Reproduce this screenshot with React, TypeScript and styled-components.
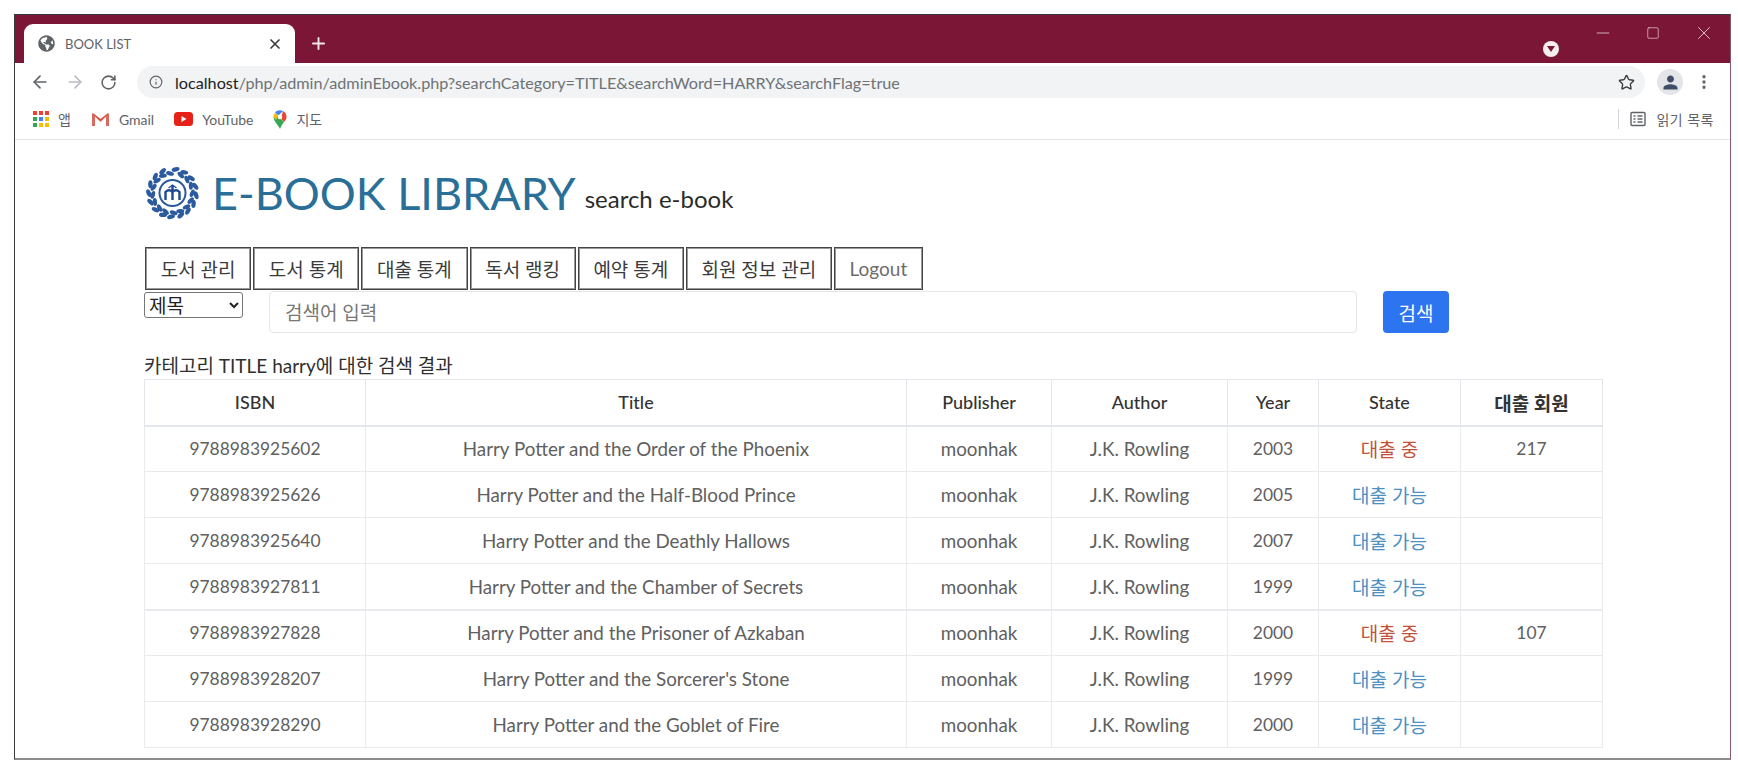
import React from 'react';
import styled, { createGlobalStyle } from 'styled-components';
import { FaGlobeAmericas } from 'react-icons/fa';
import { MdPerson } from 'react-icons/md';
import { ArrowLeft, ArrowRight, Info, Minus, MoreVertical, Plus, RotateCw, Square, Star, X } from 'lucide-react';

const LATIN = '"Lato", "Noto Sans CJK KR", sans-serif';

const GlobalStyle = createGlobalStyle`
  html, body {
    margin: 0;
    padding: 0;
    width: 1738px;
    height: 766px;
    overflow: hidden;
    background: #fff;
    font-family: ${LATIN};
  }
  * {
    box-sizing: border-box;
  }
`;

type Book = {
  isbn: string;
  title: string;
  year: string;
  member?: string;
};

const books: Book[] = [
  { isbn: '9788983925602', title: 'Harry Potter and the Order of the Phoenix', year: '2003', member: '217' },
  { isbn: '9788983925626', title: 'Harry Potter and the Half-Blood Prince', year: '2005' },
  { isbn: '9788983925640', title: 'Harry Potter and the Deathly Hallows', year: '2007' },
  { isbn: '9788983927811', title: 'Harry Potter and the Chamber of Secrets', year: '1999' },
  { isbn: '9788983927828', title: 'Harry Potter and the Prisoner of Azkaban', year: '2000', member: '107' },
  { isbn: '9788983928207', title: "Harry Potter and the Sorcerer's Stone", year: '1999' },
  { isbn: '9788983928290', title: 'Harry Potter and the Goblet of Fire', year: '2000' },
];

const menus = ['도서 관리', '도서 통계', '대출 통계', '독서 랭킹', '예약 통계', '회원 정보 관리'];
const columnWidths = [221, 541, 145, 176, 91, 142, 142];
// wreath leaves, skipping the gaps at the top and the bottom
const leafAngles = [16, 38, 60, 82, 104, 126, 148, 168, 192, 212, 234, 256, 278, 300, 322, 344];

const CollegeLogo = () => (
  <svg width="57" height="56" viewBox="0 0 57 56">
    {leafAngles.map((angle) => (
      <g key={angle} transform={`rotate(${angle} 28.5 28)`} fill="#2b5a9e">
        <ellipse cx="25" cy="4.500" rx="4" ry="2.200" transform="rotate(-30 25 4.500)" />
        <ellipse cx="31.500" cy="8.500" rx="4" ry="2.100" transform="rotate(30 31.500 8.500)" />
      </g>
    ))}
    <circle cx="28.5" cy="28" r="13" fill="#fff" stroke="#2b5a9e" strokeWidth="2" />
    <path d="M21.500 35V27q3.500-3.500 7 0q3.500-3.500 7 0v8M28.500 35V20" fill="none" stroke="#1d4a8f" strokeWidth="2.400" />
    <path d="M24.500 23l4-3 4 3" fill="none" stroke="#1d4a8f" strokeWidth="1.200" />
  </svg>
);

const AppsIcon = () => (
  <svg width="16" height="16" viewBox="0 0 16 16">
    {['#ea4335', '#ea4335', '#ea4335', '#34a853', '#4285f4', '#fbbc04', '#34a853', '#fbbc04', '#fbbc04'].map((fill, i) => (
      <rect key={i} x={(i % 3) * 6} y={Math.floor(i / 3) * 6} width="4" height="4" fill={fill} />
    ))}
  </svg>
);

const GmailIcon = () => (
  <svg width="19" height="15" viewBox="0 0 19 15">
    <path d="M1 14V1.500h1.500L9.500 7l7-5.500H18V14h-3V6L9.500 10.500 4 6v8z" fill="#e8e0de" />
    <path d="M1 14V1.500L4 4v10zM15 14V4l3-2.500V14z" fill="#d8695c" />
    <path d="M1 1.500h1.500L9.500 7l7-5.500H18L9.500 9.500z" fill="#d9463a" />
  </svg>
);

const YoutubeIcon = () => (
  <svg width="19" height="14" viewBox="0 0 19 14">
    <rect width="19" height="14" rx="3.500" fill="#e62117" />
    <path d="M7.500 4l5 3-5 3z" fill="#fff" />
  </svg>
);

const MapsIcon = () => (
  <svg width="14" height="19" viewBox="0 0 14 19">
    <path d="M7 19C5.500 15 1 12 .5 7L3 4l8 8c-1.500 2-3 4-4 7z" fill="#34a853" />
    <path d="M.5 7C.5 5.500 1 4 2 3l3 3-2 4z" fill="#fbbc04" />
    <path d="M2 2.500C3.200 1 5 .2 7 .2c1 0 2 .2 3 .8L5.500 5.500z" fill="#4285f4" />
    <path d="M10 1c2 1 3.500 3.200 3.500 6 0 2-1 3.500-2.500 5L8 8.500z" fill="#ea4335" />
    <circle cx="7" cy="7" r="2.300" fill="#fff" />
  </svg>
);

const ReadingIcon = () => (
  <svg width="16" height="16" viewBox="0 0 16 16" fill="none" stroke="#5f6368" strokeWidth="1.400">
    <rect x="1" y="1.500" width="14" height="13" rx="1" />
    <path d="M3.500 5h2M3.500 8h2M3.500 11h2M7.500 5h5M7.500 8h5M7.500 11h5" />
  </svg>
);

const App = () => (
  <Screen>
    <GlobalStyle />
    <BrowserWindow>
      <TabStrip>
        <Tab>
          <TabFavicon>
            <FaGlobeAmericas size={17} />
          </TabFavicon>
          <TabTitle>BOOK LIST</TabTitle>
          <X size={16} color="#3c4043" strokeWidth={2.6} />
        </Tab>
        <NewTab>
          <Plus size={19} strokeWidth={2.4} />
        </NewTab>
        <ProfileBadge>
          <svg width="8" height="6" viewBox="0 0 8 6">
            <path d="M0 0h8L4 6z" fill="#7c1637" />
          </svg>
        </ProfileBadge>
        <WindowControls>
          <Minus size={20} strokeWidth={0.9} />
          <Square size={14} strokeWidth={1.1} />
          <X size={22} strokeWidth={0.9} />
        </WindowControls>
      </TabStrip>

      <Toolbar>
        <NavIcons>
          <ArrowLeft size={20} color="#5f6368" />
          <ArrowRight size={20} color="#b9bcc0" />
          <RotateCw size={17} color="#5f6368" strokeWidth={2.2} />
        </NavIcons>
        <AddressBar>
          <Info size={14} color="#5f6368" />
          <Url>
            <strong>localhost</strong>/php/admin/adminEbook.php?searchCategory=TITLE&amp;searchWord=HARRY&amp;searchFlag=true
          </Url>
          <Star size={17} color="#3c4043" />
        </AddressBar>
        <Avatar>
          <MdPerson size={21} color="#3f4d66" />
        </Avatar>
        <MoreVertical size={18} color="#5f6368" strokeWidth={2.4} />
      </Toolbar>

      <BookmarksBar>
        <Bookmark>
          <AppsIcon />앱
        </Bookmark>
        <Bookmark>
          <GmailIcon />Gmail
        </Bookmark>
        <Bookmark>
          <YoutubeIcon />YouTube
        </Bookmark>
        <Bookmark>
          <MapsIcon />지도
        </Bookmark>
        <ReadingList>
          <ReadingIcon />읽기 목록
        </ReadingList>
      </BookmarksBar>

      <Page>
        <Header>
          <CollegeLogo />
          <SiteTitle>E-BOOK LIBRARY</SiteTitle>
          <SiteSubtitle>search e-book</SiteSubtitle>
        </Header>

        <Menu>
          {menus.map((menu) => (
            <MenuButton key={menu}>{menu}</MenuButton>
          ))}
          <MenuButton $muted>Logout</MenuButton>
        </Menu>

        <SearchForm>
          <CategorySelect defaultValue="title">
            <option value="title">제목</option>
          </CategorySelect>
          <SearchInput placeholder="검색어 입력" />
          <SearchButton>검색</SearchButton>
        </SearchForm>

        <ResultCaption>카테고리 TITLE harry에 대한 검색 결과</ResultCaption>

        <BookTable>
          <colgroup>
            {columnWidths.map((width, i) => (
              <col key={i} width={width} />
            ))}
          </colgroup>
          <thead>
            <tr>
              <HeadCell>ISBN</HeadCell>
              <HeadCell>Title</HeadCell>
              <HeadCell>Publisher</HeadCell>
              <HeadCell>Author</HeadCell>
              <HeadCell>Year</HeadCell>
              <HeadCell>State</HeadCell>
              <HeadCell $strong>대출 회원</HeadCell>
            </tr>
          </thead>
          <tbody>
            {books.map((book, i) => (
              <BookRow key={book.isbn} $thick={i === 4}>
                <NumberCell>{book.isbn}</NumberCell>
                <Cell>{book.title}</Cell>
                <Cell>moonhak</Cell>
                <Cell>J.K. Rowling</Cell>
                <NumberCell>{book.year}</NumberCell>
                <StateCell $out={!!book.member}>{book.member ? '대출 중' : '대출 가능'}</StateCell>
                <NumberCell>{book.member}</NumberCell>
              </BookRow>
            ))}
          </tbody>
        </BookTable>
      </Page>
    </BrowserWindow>
  </Screen>
);

const Screen = styled.div`
  width: 1738px;
  height: 766px;
  padding: 14px 7px 6px 14px;
`;

const BrowserWindow = styled.div`
  height: 100%;
  display: flex;
  flex-direction: column;
  overflow: hidden;
  border-top: 1px solid #3a3a3a;
  border-left: 1px solid #3a3a3a;
  border-right: 1px solid #8a5a6c;
  border-bottom: 2px solid #8c8c8c;
`;

const TabStrip = styled.div`
  height: 48px;
  flex: none;
  display: flex;
  align-items: flex-end;
  padding-left: 9px;
  background: #7c1637;
`;

const Tab = styled.div`
  width: 271px;
  height: 39px;
  display: flex;
  align-items: center;
  padding: 0 12px 0 14px;
  background: #fff;
  border-radius: 9px 9px 0 0;
`;

const TabFavicon = styled.span`
  display: flex;
  color: #5f6368;
`;

const TabTitle = styled.span`
  flex: 1;
  margin-left: 10px;
  font-size: 13px;
  color: #5f6368;
`;

const NewTab = styled.div`
  height: 39px;
  display: flex;
  align-items: center;
  margin-left: 14px;
  color: #f1e6ea;
`;

const ProfileBadge = styled.div`
  width: 16px;
  height: 16px;
  display: flex;
  align-items: center;
  justify-content: center;
  margin: 0 0 6px auto;
  border-radius: 50%;
  background: #f5eef0;
`;

const WindowControls = styled.div`
  width: 165px;
  align-self: flex-start;
  display: flex;
  align-items: center;
  justify-content: space-between;
  padding: 7px 15px 0 28px;
  margin-left: 6px;
  color: #f0dfe5;
`;

const Toolbar = styled.div`
  height: 38px;
  flex: none;
  display: flex;
  align-items: center;
  padding: 0 10px 0 15px;
  background: #fff;
`;

const NavIcons = styled.div`
  width: 107px;
  display: flex;
  align-items: center;
  gap: 15px;
`;

const AddressBar = styled.div`
  width: 1508px;
  height: 32px;
  display: flex;
  align-items: center;
  padding: 0 10px 0 12px;
  background: #f1f3f4;
  border-radius: 16px;
`;

const Url = styled.span`
  flex: 1;
  margin-left: 12px;
  font-size: 16.2px;
  color: #6e7276;

  strong {
    font-weight: 400;
    color: #202124;
  }
`;

const Avatar = styled.div`
  width: 26px;
  height: 26px;
  display: flex;
  align-items: center;
  justify-content: center;
  margin: 0 12px 0 12px;
  border-radius: 50%;
  background: #e3e5e9;
`;

const BookmarksBar = styled.div`
  height: 39px;
  flex: none;
  display: flex;
  align-items: center;
  padding: 0 16px 2px 18px;
  gap: 20px;
  background: #fff;
  border-bottom: 1px solid #e4e5e7;
`;

const Bookmark = styled.div`
  display: flex;
  align-items: center;
  gap: 9px;
  font-size: 14px;
  color: #5f6368;
`;

const ReadingList = styled(Bookmark)`
  margin-left: auto;
  padding-left: 11px;
  gap: 10px;
  letter-spacing: 0.5px;
  border-left: 1px solid #d5d7da;
  height: 20px;
`;

const Page = styled.main`
  flex: 1;
  padding: 24px 0 0 129px;
  background: #fff;
`;

const Header = styled.header`
  height: 57px;
  display: flex;
  align-items: flex-end;
`;

const SiteTitle = styled.h1`
  margin: 0 0 0 11px;
  font-size: 45px;
  line-height: 56px;
  font-weight: 400;
  color: #2a6f97;
`;

const SiteSubtitle = styled.span`
  margin: 0 0 8px 9px;
  font-size: 24px;
  color: #2b2b2b;
`;

const Menu = styled.nav`
  display: flex;
  gap: 2px;
  margin-top: 26px;
  padding-left: 1px;
`;

const MenuButton = styled.button<{ $muted?: boolean }>`
  height: 43px;
  padding: 0 14.7px;
  background: #fff;
  border: 1px solid #444;
  outline: 1px solid #999;
  outline-offset: -2px;
  font-family: ${LATIN};
  font-size: 19px;
  color: ${(p) => (p.$muted ? '#6c6c6c' : '#3b3b3b')};
`;

const SearchForm = styled.form`
  display: flex;
  align-items: flex-start;
  margin-top: 1px;
`;

const CategorySelect = styled.select`
  width: 99px;
  height: 26px;
  margin-top: 1px;
  font-family: ${LATIN};
  font-size: 19px;
  color: #222;
  border: 1px solid #767676;
  border-radius: 3px;
  background: #fff;
`;

const SearchInput = styled.input`
  width: 1088px;
  height: 42px;
  margin-left: 26px;
  padding: 0 15px;
  font-family: ${LATIN};
  font-size: 19px;
  border: 1px solid #e3e6ea;
  border-radius: 4px;

  &::placeholder {
    color: #777;
  }
`;

const SearchButton = styled.button`
  width: 66px;
  height: 42px;
  margin-left: 26px;
  font-family: ${LATIN};
  font-size: 19px;
  color: #fff;
  background: #2d74f0;
  border: none;
  border-radius: 4px;
`;

const ResultCaption = styled.p`
  margin: 20px 0 0;
  height: 26px;
  line-height: 26px;
  font-size: 19px;
  color: #2f2f2f;
`;

const BookTable = styled.table`
  width: 1458px;
  table-layout: fixed;
  border-collapse: collapse;
`;

const HeadCell = styled.th<{ $strong?: boolean }>`
  height: 46px;
  padding: 0;
  font-size: ${(p) => (p.$strong ? 19 : 18)}px;
  font-weight: ${(p) => (p.$strong ? 700 : 500)};
  color: #333;
  border: 1px solid #e3e6ea;
  border-bottom-width: 2px;
`;

const BookRow = styled.tr<{ $thick?: boolean }>`
  height: 46px;

  td {
    border-top-width: ${(p) => (p.$thick ? 2 : 1)}px;
  }
`;

const Cell = styled.td`
  padding: 0;
  text-align: center;
  font-size: 18.8px;
  color: #606060;
  border: 1px solid #e8eaed;
`;

const NumberCell = styled(Cell)`
  font-size: 17.4px;
`;

const StateCell = styled(Cell)<{ $out: boolean }>`
  font-size: 19px;
  color: ${(p) => (p.$out ? '#c4513a' : '#4a90c2')};
`;

export default App;
